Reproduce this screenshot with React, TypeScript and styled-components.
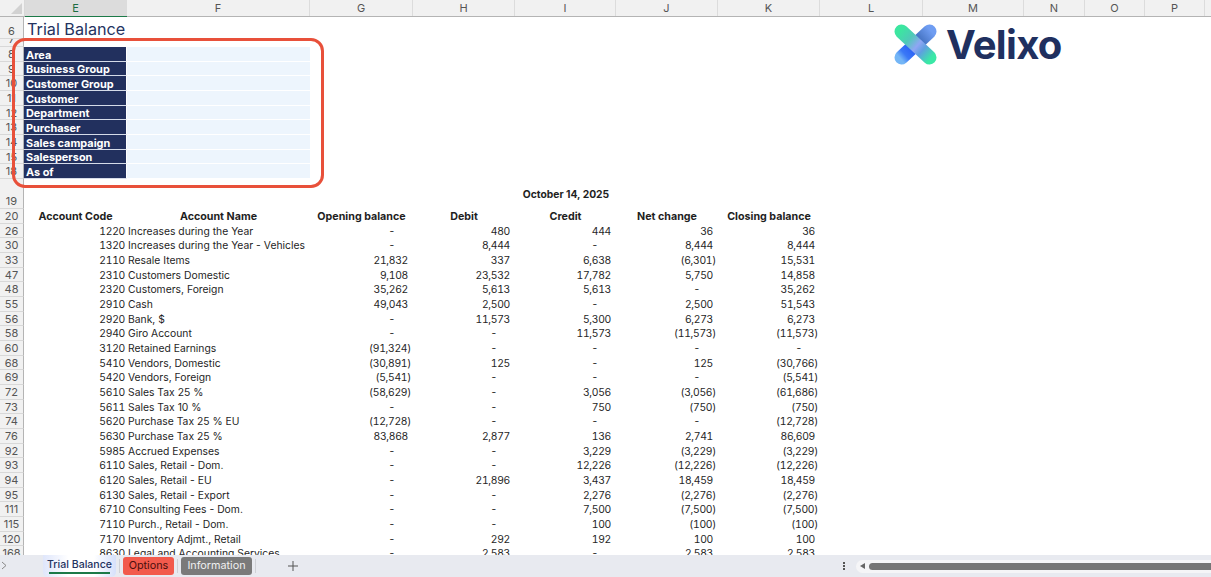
import styled, { createGlobalStyle } from "styled-components"

const GlobalStyle = createGlobalStyle`
  html, body { margin: 0; padding: 0; background: #fff; overflow: hidden; }
  body { font-family: Inter, "Liberation Sans", sans-serif; }
`

const ROW_H = 14.67
const COLS = "103px 183px 103px 102px 101px 102px 102px 103px 101px 61px 60px 60px"

// keeps every row on whole pixels while the average stays the sheet's 14.67
const rowHeight = (i: number) => Math.round((i + 1) * ROW_H) - Math.round(i * ROW_H)

const columns = [
  ["E", 102], ["F", 183], ["G", 103], ["H", 102], ["I", 101], ["J", 102], ["K", 102],
  ["L", 103], ["M", 101], ["N", 61], ["O", 60], ["P", 60],
] as const

const filters = [
  ["8", "Area"], ["9", "Business Group"], ["10", "Customer Group"], ["11", "Customer"],
  ["12", "Department"], ["13", "Purchaser"], ["14", "Sales campaign"], ["15", "Salesperson"], ["18", "As of"],
]

const heads = ["Opening balance", "Debit", "Credit", "Net change", "Closing balance"]

const rows: string[][] = [
  ["26", "1220", "Increases during the Year", "-", "480", "444", "36", "36"],
  ["30", "1320", "Increases during the Year - Vehicles", "-", "8,444", "-", "8,444", "8,444"],
  ["33", "2110", "Resale Items", "21,832", "337", "6,638", "(6,301)", "15,531"],
  ["47", "2310", "Customers Domestic", "9,108", "23,532", "17,782", "5,750", "14,858"],
  ["48", "2320", "Customers, Foreign", "35,262", "5,613", "5,613", "-", "35,262"],
  ["55", "2910", "Cash", "49,043", "2,500", "-", "2,500", "51,543"],
  ["56", "2920", "Bank, $", "-", "11,573", "5,300", "6,273", "6,273"],
  ["58", "2940", "Giro Account", "-", "-", "11,573", "(11,573)", "(11,573)"],
  ["60", "3120", "Retained Earnings", "(91,324)", "-", "-", "-", "-"],
  ["68", "5410", "Vendors, Domestic", "(30,891)", "125", "-", "125", "(30,766)"],
  ["69", "5420", "Vendors, Foreign", "(5,541)", "-", "-", "-", "(5,541)"],
  ["72", "5610", "Sales Tax 25 %", "(58,629)", "-", "3,056", "(3,056)", "(61,686)"],
  ["73", "5611", "Sales Tax 10 %", "-", "-", "750", "(750)", "(750)"],
  ["74", "5620", "Purchase Tax 25 % EU", "(12,728)", "-", "-", "-", "(12,728)"],
  ["76", "5630", "Purchase Tax 25 %", "83,868", "2,877", "136", "2,741", "86,609"],
  ["92", "5985", "Accrued Expenses", "-", "-", "3,229", "(3,229)", "(3,229)"],
  ["93", "6110", "Sales, Retail - Dom.", "-", "-", "12,226", "(12,226)", "(12,226)"],
  ["94", "6120", "Sales, Retail - EU", "-", "21,896", "3,437", "18,459", "18,459"],
  ["95", "6130", "Sales, Retail - Export", "-", "-", "2,276", "(2,276)", "(2,276)"],
  ["111", "6710", "Consulting Fees - Dom.", "-", "-", "7,500", "(7,500)", "(7,500)"],
  ["115", "7110", "Purch., Retail - Dom.", "-", "-", "100", "(100)", "(100)"],
  ["120", "7170", "Inventory Adjmt., Retail", "-", "292", "192", "100", "100"],
  ["168", "8630", "Legal and Accounting Services", "-", "2,583", "-", "2,583", "2,583"],
]

const Page = styled.div`
  width: 1211px;
  height: 577px;
  display: flex;
  flex-direction: column;
  position: relative;
  overflow: hidden;
  background: #fff;
  color: #1f1f1f;
`

const ColumnBar = styled.div`
  display: flex;
  flex: none;
  height: 16px;
  background: #f1f1f1;
  border-bottom: 1px solid #b4b4b4;
  box-sizing: content-box;
`

const Corner = styled.div`
  width: 25px;
  flex: none;
  display: flex;
  align-items: flex-end;
  justify-content: flex-end;
  padding: 0 2px 2px 0;
  box-sizing: border-box;
  border-right: 1px solid #d8d8d8;
`

const ColumnHead = styled.div<{ $w: number; $active?: boolean }>`
  width: ${p => p.$w}px;
  flex: none;
  box-sizing: border-box;
  text-align: center;
  font-size: 11px;
  line-height: 16px;
  color: ${p => (p.$active ? "#1c6c41" : "#555")};
  background: ${p => (p.$active ? "#dcdcdc" : "transparent")};
  border-right: 1px solid #dcdcdc;
  box-shadow: ${p => (p.$active ? "0 1px 0 #1c7a48" : "none")};
`

const Sheet = styled.div`
  flex: 1;
  min-height: 0;
  overflow: hidden;
`

const Row = styled.div<{ $h: number; $tight?: boolean }>`
  display: grid;
  grid-template-columns: 24px ${COLS};
  grid-template-rows: ${p => p.$h}px;
  height: ${p => p.$h}px;
  font-size: 10.35px;
  line-height: ${p => (p.$tight ? p.$h : p.$h + 1)}px;
  white-space: nowrap;
`

const RowLabel = styled.div<{ $bottom?: boolean }>`
  background: #f1f1f1;
  border-right: 1px solid #b4b4b4;
  border-bottom: 1px solid #d8d8d8;
  box-sizing: border-box;
  text-align: center;
  color: #555;
  font-size: 11px;
  overflow: hidden;
  display: flex;
  justify-content: center;
  align-items: ${p => (p.$bottom ? "flex-end" : "center")};
  line-height: 14px;
`

const Title = styled.div`
  grid-column: 2 / span 3;
  font-size: 16.2px;
  padding: 1px 0 0 3px;
  color: #24335f;
  align-self: center;
  line-height: 22px;
`

const FilterLabel = styled.div`
  background: #22305e;
  color: #fff;
  font-weight: 700;
  font-size: 10.9px;
  padding-left: 2px;
  border-bottom: 1px solid #d5dbe8;
  border-right: 1px solid #fff;
  box-sizing: border-box;
  overflow: hidden;
`

const FilterValue = styled.div`
  background: #edf5fd;
  border-bottom: 1px solid #fff;
  box-sizing: border-box;
`

const DateCell = styled.div`
  grid-column: 2 / span 8;
  text-align: center;
  font-weight: 700;
  font-size: 10.3px;
  margin-left: 479px;
  width: 126px;
  align-self: center;
`

const HeadCell = styled.div`
  font-weight: 700;
  font-size: 10.7px;
  text-align: center;
`

const CodeCell = styled.div`
  text-align: right;
  padding-right: 2px;
  font-variant-numeric: tabular-nums;
  letter-spacing: -0.3px;
`

const NameCell = styled.div`
  padding-left: 1px;
  overflow: visible;
`

const Amount = styled.div<{ $kind: string }>`
  text-align: right;
  padding-right: ${p => (p.$kind === "dash" ? 18 : p.$kind === "neg" ? 2 : 5)}px;
  color: #262626;
  font-variant-numeric: tabular-nums;
  letter-spacing: -0.3px;
`

const TabBar = styled.div`
  flex: none;
  height: 22px;
  background: #e8eaf0;
  display: flex;
  align-items: center;
  font-size: 11px;
`

const Chevron = styled.div`
  width: 43px;
  flex: none;
  padding-left: 1px;
  color: #888;
  box-sizing: border-box;
`

const ActiveTab = styled.div`
  width: 73px;
  flex: none;
  height: 22px;
  box-sizing: border-box;
  padding-top: 4px;
  text-align: center;
  font-weight: 500;
  font-size: 10.6px;
  color: #24335f;
  background: linear-gradient(90deg, #dfe6fb, #fff 35%, #fff 70%, #d6e0fb);
  border-radius: 0 0 5px 5px;
  position: relative;
  line-height: 11px;

  &::after {
    content: "";
    display: block;
    margin: 2px 6px 0;
    height: 2px;
    background: #1c7a48;
  }
`

const Sep = styled.div`
  width: 1px;
  height: 14px;
  background: #cfd1d6;
  flex: none;
  margin: 0 3px;
`

const ColorTab = styled.div<{ $bg: string; $fg: string; $w: number }>`
  width: ${p => p.$w}px;
  flex: none;
  height: 18px;
  line-height: 18px;
  text-align: center;
  border-radius: 3px;
  font-size: 10.8px;
  background: ${p => p.$bg};
  color: ${p => p.$fg};
`

const AddTab = styled.div`
  margin-left: 29px;
  width: 12px;
  flex: none;
  color: #555;
  display: flex;
`

const ScrollArea = styled.div`
  margin-left: auto;
  display: flex;
  align-items: center;
  height: 22px;
`

const Dots = styled.div`
  display: flex;
  flex-direction: column;
  gap: 1px;
  margin-right: 11px;

  span {
    width: 2px;
    height: 2px;
    background: #555;
  }
`

const Track = styled.div`
  width: 355px;
  height: 13px;
  border-radius: 7px 0 0 7px;
  background: #f5f5f7;
  display: flex;
  align-items: center;
  padding-left: 4px;
  box-sizing: border-box;
  gap: 4px;
`

const TrackArrow = styled.div`
  width: 0;
  height: 0;
  flex: none;
  border-style: solid;
  border-width: 3.5px 5px 3.5px 0;
  border-color: transparent #666 transparent transparent;
`

const Thumb = styled.div`
  flex: 1;
  height: 7px;
  border-radius: 4px 0 0 4px;
  background: #757575;
`

const Callout = styled.div`
  position: absolute;
  left: 12px;
  top: 38px;
  width: 312px;
  height: 150px;
  box-sizing: border-box;
  border: 3px solid #e8503a;
  border-radius: 13px;
`

const Logo = styled.div`
  position: absolute;
  left: 893px;
  top: 24px;
  display: flex;
  align-items: center;
  gap: 8px;
`

const LogoWord = styled.div`
  font-family: Inter, "Liberation Sans", sans-serif;
  font-weight: 700;
  font-size: 40px;
  letter-spacing: -0.7px;
  line-height: 41px;
  color: #20305f;
`

const kindOf = (v: string) => (v === "-" ? "dash" : v.startsWith("(") ? "neg" : "pos")

function LogoMark() {
  return (
    <svg width="45" height="41" viewBox="0 0 45 41">
      <defs>
        <linearGradient id="over" gradientUnits="userSpaceOnUse" x1="7" y1="7" x2="38" y2="34">
          <stop offset="0" stopColor="#3ce6a0" />
          <stop offset="0.3" stopColor="#4fc9b8" />
          <stop offset="0.55" stopColor="#8fa6f4" />
          <stop offset="0.72" stopColor="#5f9fe0" />
          <stop offset="1" stopColor="#3ae8a6" />
        </linearGradient>
        <linearGradient id="under" gradientUnits="userSpaceOnUse" x1="38" y1="7" x2="7" y2="34">
          <stop offset="0" stopColor="#6f9df2" />
          <stop offset="0.3" stopColor="#4a78c8" />
          <stop offset="0.65" stopColor="#2c63f6" />
          <stop offset="0.85" stopColor="#3a78f6" />
          <stop offset="1" stopColor="#74b6f6" />
        </linearGradient>
      </defs>
      <path d="M36.5 7.5L8.5 33.5" stroke="url(#under)" strokeWidth="14" strokeLinecap="round" fill="none" />
      <path d="M8.5 7.5L36.5 33.5" stroke="url(#over)" strokeWidth="14" strokeLinecap="round" fill="none" />
    </svg>
  )
}

export default function App() {
  return (
    <Page>
      <GlobalStyle />
      <ColumnBar>
        <Corner>
          <svg width="11" height="11" viewBox="0 0 11 11"><path d="M11 0V11H0Z" fill="#d2d2d2" /></svg>
        </Corner>
        {columns.map(([name, w]) => (
          <ColumnHead key={name} $w={w} $active={name === "E"}>{name}</ColumnHead>
        ))}
      </ColumnBar>

      <Sheet>
        <Row $h={22}>
          <RowLabel $bottom>6</RowLabel>
          <Title>Trial Balance</Title>
        </Row>
        <Row $h={8}>
          <RowLabel $bottom>7</RowLabel>
        </Row>
        {filters.map(([num, label], i) => (
          <Row key={num} $h={rowHeight(i)}>
            <RowLabel>{num}</RowLabel>
            <FilterLabel>{label}</FilterLabel>
            <FilterValue />
          </Row>
        ))}
        <Row $h={30}>
          <RowLabel $bottom>19</RowLabel>
          <DateCell>October 14, 2025</DateCell>
        </Row>
        <Row $h={rowHeight(0)}>
          <RowLabel>20</RowLabel>
          <HeadCell>Account Code</HeadCell>
          <HeadCell>Account Name</HeadCell>
          {heads.map(h => <HeadCell key={h}>{h}</HeadCell>)}
        </Row>
        {rows.map(([num, code, name, ...amounts], i) => (
          <Row key={num} $h={rowHeight(i + 1)} $tight>
            <RowLabel>{num}</RowLabel>
            <CodeCell>{code}</CodeCell>
            <NameCell>{name}</NameCell>
            {amounts.map((v, j) => <Amount key={j} $kind={kindOf(v)}>{v}</Amount>)}
          </Row>
        ))}
      </Sheet>

      <TabBar>
        <Chevron>
          <svg width="6" height="9" viewBox="0 0 6 9"><path d="M1 1l4 3.5L1 8" fill="none" stroke="#888" /></svg>
        </Chevron>
        <ActiveTab>Trial Balance</ActiveTab>
        <Sep />
        <ColorTab $bg="#f25a4c" $fg="#4a0f0c" $w={51}>Options</ColorTab>
        <Sep />
        <ColorTab $bg="#7a7a7a" $fg="#f0f0f0" $w={71}>Information</ColorTab>
        <Sep />
        <AddTab>
          <svg width="10" height="10" viewBox="0 0 10 10"><path d="M5 0v10M0 5h10" stroke="#555" /></svg>
        </AddTab>
        <ScrollArea>
          <Dots><span /><span /><span /></Dots>
          <Track>
            <TrackArrow />
            <Thumb />
          </Track>
        </ScrollArea>
      </TabBar>

      <Callout />
      <Logo>
        <LogoMark />
        <LogoWord>Velixo</LogoWord>
      </Logo>
    </Page>
  )
}
